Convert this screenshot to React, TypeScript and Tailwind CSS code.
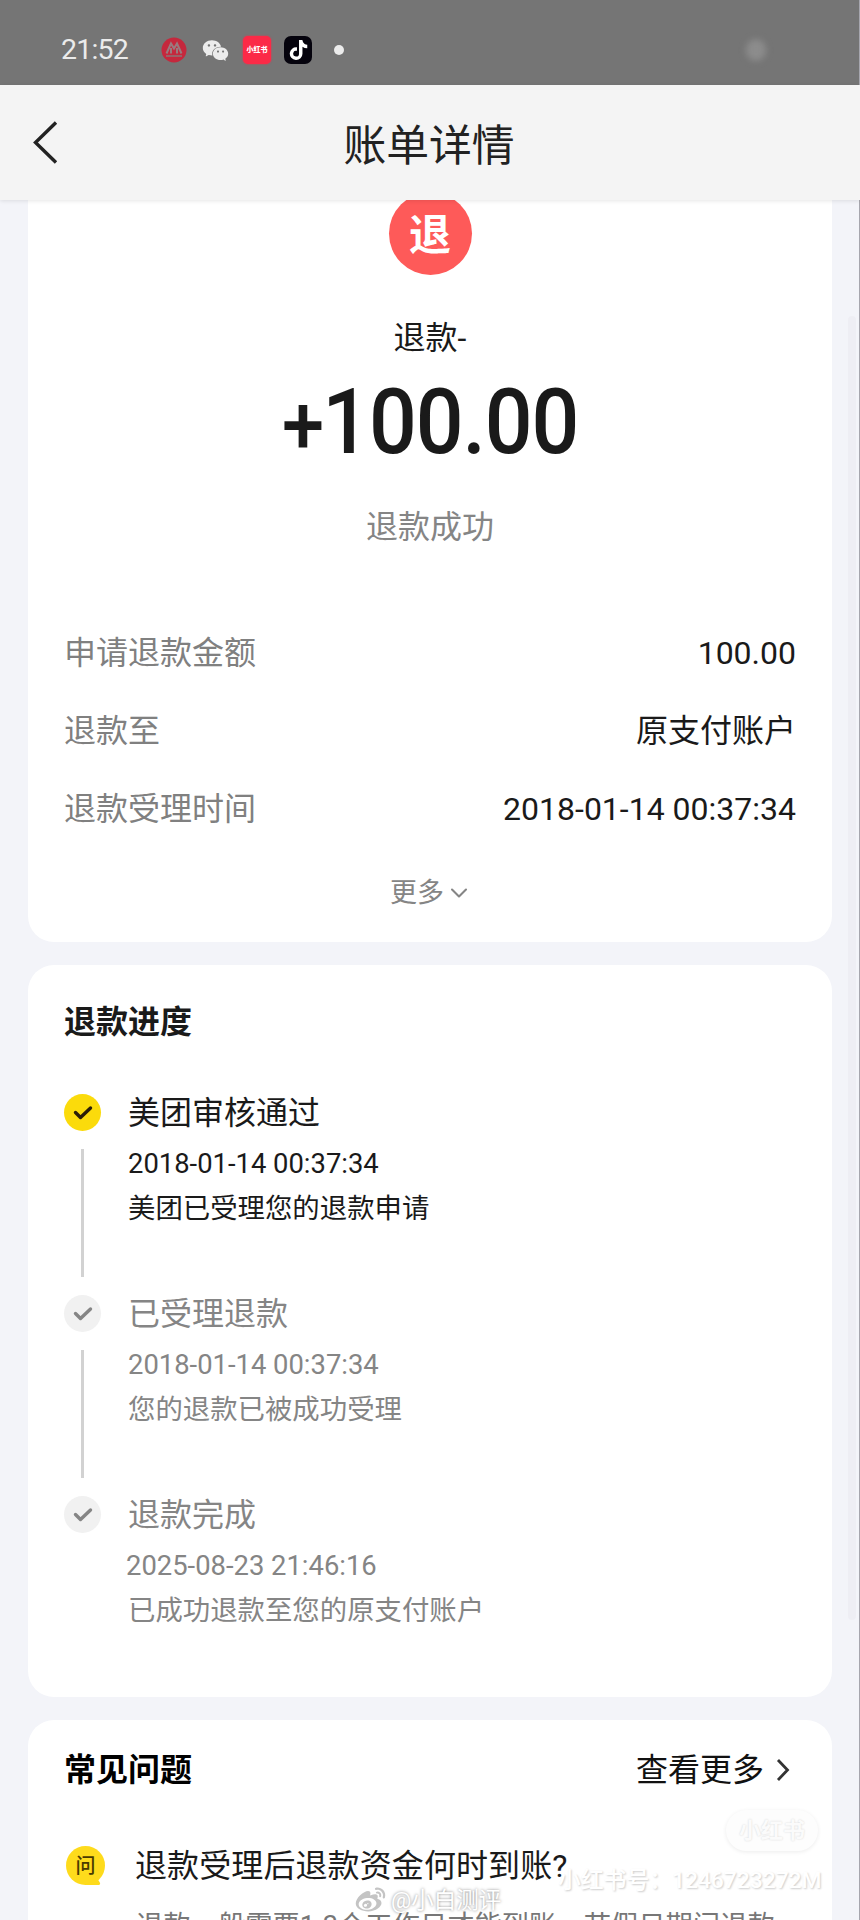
import { ChevronDown } from "lucide-react";
import { AiFillWechat, AiOutlineWeibo } from "react-icons/ai";
import { FaTiktok } from "react-icons/fa6";

const details = [
  { label: "申请退款金额", value: "100.00" },
  { label: "退款至", value: "原支付账户" },
  { label: "退款受理时间", value: "2018-01-14 00:37:34" },
];

const steps = [
  {
    title: "美团审核通过",
    time: "2018-01-14 00:37:34",
    desc: "美团已受理您的退款申请",
    active: true,
  },
  {
    title: "已受理退款",
    time: "2018-01-14 00:37:34",
    desc: "您的退款已被成功受理",
    active: false,
  },
  {
    title: "退款完成",
    time: "2025-08-23 21:46:16",
    desc: "已成功退款至您的原支付账户",
    active: false,
  },
];

function StatusBar() {
  return (
    <div className="h-[85px] bg-[#757575] flex items-center pl-[61px] pt-[15px] shrink-0">
      <span className="w-[100px] text-[28.5px] leading-[40px] tracking-[-0.8px] text-[#ebebeb]">
        21:52
      </span>
      <svg className="w-[26px] h-[26px]" viewBox="0 0 26 26">
        <circle cx="13" cy="13" r="12.5" fill="#c5283d" />
        <path d="M5 19h16" stroke="#8a7476" strokeWidth="1.5" />
        <path
          d="M5.5 16.500L10 6.500L13 11.500L16 6.500L20.500 16.500M10 16.500V11M16 16.500V11"
          fill="none"
          stroke="#9a7a7e"
          strokeWidth="2"
        />
      </svg>
      <AiFillWechat className="w-[29px] h-[29px] ml-[14px] text-[#ececec]" />
      <div className="w-[28px] h-[28px] ml-[13px] rounded-[5px] bg-[#fb2a47] shadow-[0_0_2px_#fb2a47] flex items-center justify-center">
        <span className="text-[7px] leading-none font-black text-white whitespace-nowrap">小红书</span>
      </div>
      <div className="w-[28px] h-[28px] ml-[13px] rounded-[7px] bg-[#05030d] flex items-center justify-center">
        <FaTiktok className="w-[19px] h-[20px] text-white" />
      </div>
      <div className="w-[10px] h-[10px] ml-[22px] rounded-full bg-[#ececec]" />
      <div className="w-[20px] h-[22px] ml-[402px] rounded-full bg-[#8c8c8c] blur-[3px]" />
    </div>
  );
}

function Step({ step, last }) {
  return (
    <div className="flex h-[201px]">
      <div className="w-[37px] flex flex-col items-center shrink-0">
        <div
          className={
            step.active
              ? "w-[37px] h-[37px] rounded-full bg-[#fbdb0b] flex items-center justify-center text-[#2a1d08]"
              : "w-[37px] h-[37px] rounded-full bg-[#f1f1f1] flex items-center justify-center text-[#858585]"
          }
        >
          <svg className="w-[20px] h-[16px]" viewBox="0 0 20 16">
            <path
              d="M2.5 7.5L7.5 12.5L17.5 3"
              fill="none"
              stroke="currentColor"
              strokeWidth="3.4"
              strokeLinecap="round"
              strokeLinejoin="round"
            />
          </svg>
        </div>
        {!last && <div className="w-[3px] h-[128px] mt-[18px] bg-[#d2d2d2]" />}
      </div>
      <div className={step.active ? "ml-[27px] text-[#1a1a1a]" : "ml-[27px] text-[#858585]"}>
        <div className="mt-[1px] h-[37px] text-[32px] leading-[37px]">{step.title}</div>
        <div
          className={
            last
              ? "mt-[14px] -ml-[2px] h-[36px] text-[27.4px] leading-[36px]"
              : "mt-[14px] h-[36px] text-[27.4px] leading-[36px]"
          }
        >
          {step.time}
        </div>
        <div className="mt-[9px] h-[36px] text-[27.4px] leading-[36px]">{step.desc}</div>
      </div>
    </div>
  );
}

function App() {
  return (
    <div className="relative w-[860px] h-[1920px] overflow-hidden flex flex-col bg-[#f3f4f9] whitespace-nowrap font-[Roboto,'Noto_Sans_CJK_SC',sans-serif]">
      <StatusBar />
      <header className="h-[115px] bg-[#f4f4f4] flex items-center justify-center relative shrink-0 z-10 shadow-[0_1px_4px_rgba(0,0,0,0.1)]">
        <svg className="absolute left-[32px] top-[35px] w-[27px] h-[46px]" viewBox="0 0 27 46">
          <path d="M24 2.500L3.500 22.500L24 42.500" fill="none" stroke="#222" strokeWidth="3.400" />
        </svg>
        <h1 className="text-[42.8px] leading-[60px] mt-[6px] mr-[2px] text-[#222]">账单详情</h1>
      </header>

      <section className="mx-[28px] h-[742px] bg-white rounded-b-[26px] flex flex-col items-center shrink-0">
        <div className="w-[83px] h-[83px] -mt-[8px] rounded-full bg-[#fe5a59] flex items-center justify-center pt-[4px] text-[42px] leading-none font-bold text-white shrink-0">
          退
        </div>
        <div className="mt-[43px] h-[40px] text-[32px] leading-[40px] text-[#1a1a1a]">退款-</div>
        <div className="mt-[14px] h-[100px] flex items-center text-[91px] leading-[100px] font-medium text-[#1a1a1a] scale-x-[0.925]">
          <span className="text-[82px] mt-[5px] mr-[-2px]">+</span>
          <span className="tracking-[-1.200px]">100.00</span>
        </div>
        <div className="mt-[35px] h-[40px] text-[32px] leading-[40px] text-[#858585]">退款成功</div>
        <div className="w-full px-[36px] mt-[67px]">
          {details.map((item) => (
            <div key={item.label} className="h-[78px] flex items-center justify-between text-[32px]">
              <span className="text-[#808080]">{item.label}</span>
              <span className="text-[#1a1a1a]">{item.value}</span>
            </div>
          ))}
        </div>
        <div className="mt-[27px] h-[36px] flex items-center text-[27px] text-[#858585]">
          更多
          <ChevronDown className="w-[28px] h-[28px] ml-[1px] -mr-[3px]" strokeWidth={1.8} />
        </div>
      </section>

      <section className="mx-[28px] mt-[23px] h-[732px] bg-white rounded-[26px] px-[36px] pt-[37px] shrink-0">
        <h2 className="h-[40px] text-[32px] leading-[40px] font-bold text-[#1a1a1a]">退款进度</h2>
        <div className="mt-[52px]">
          {steps.map((step, index) => (
            <Step key={step.title} step={step} last={index === steps.length - 1} />
          ))}
        </div>
      </section>

      <section className="mx-[28px] mt-[23px] h-[200px] bg-white rounded-t-[26px] px-[36px] pt-[30px] shrink-0">
        <div className="h-[40px] flex items-center justify-between">
          <h2 className="text-[32px] leading-[40px] font-bold text-black">常见问题</h2>
          <div className="flex items-center text-[32px] leading-[40px] text-[#111]">
            查看更多
            <svg className="w-[14px] h-[24px] ml-[12px] mr-[6px]" viewBox="0 0 14 24">
              <path d="M2 2L11.500 12L2 22" fill="none" stroke="#333" strokeWidth="2.800" />
            </svg>
          </div>
        </div>
        <div className="mt-[55px] flex items-center h-[40px]">
          <div className="relative w-[39px] h-[39px] ml-[2px] flex items-center justify-center text-[20px] leading-none font-medium text-[#4a3a00]">
            <svg className="absolute inset-0 w-[39px] h-[39px]" viewBox="0 0 39 39">
              <circle cx="19.500" cy="19.500" r="19.500" fill="#fedb1c" />
              <path d="M19 39H33Q35 38 33.500 36L31 32Z" fill="#fedb1c" />
            </svg>
            <span className="relative mt-[1px]">问</span>
          </div>
          <span className="ml-[30px] mt-[2px] text-[32px] leading-[40px] tracking-[0.1px] text-[#1a1a1a]">
            退款受理后退款资金何时到账?
          </span>
        </div>
        <div className="mt-[23px] ml-[72px] text-[27.3px] leading-[36px] text-[#777]">
          退款一般需要1-3个工作日才能到账，节假日期间退款
        </div>
      </section>

      {/* watermarks */}
      <div className="absolute left-[726px] top-[1810px] w-[92px] h-[41px] rounded-full bg-[#fdfdfd] shadow-[0_1px_4px_rgba(0,0,0,0.08)] flex items-center justify-center text-[22px] font-bold text-[#fbfbfb] [text-shadow:0_0_2px_rgba(0,0,0,0.16)]">
        小红书
      </div>
      <div className="absolute left-[558px] top-[1865px] text-[22.8px] leading-[32px] font-medium text-white [text-shadow:1px_1px_2px_rgba(0,0,0,0.2)]">
        小红书号：1246723272M
      </div>
      <div className="absolute left-[353px] top-[1882px] flex items-center text-[22.500px] leading-[34px] text-white [text-shadow:0_0_3px_rgba(0,0,0,0.5)]">
        <AiOutlineWeibo className="w-[35px] h-[35px] mr-[3px] text-[#c4c4c4]" />
        @小白测评
      </div>

      <div className="absolute left-[848px] top-[316px] w-[8px] h-[1304px] rounded-full bg-[#eeeef4]" />
      <div className="absolute right-0 top-0 w-[1px] h-full bg-[#a6a6ae]" />
    </div>
  );
}

export default App;
